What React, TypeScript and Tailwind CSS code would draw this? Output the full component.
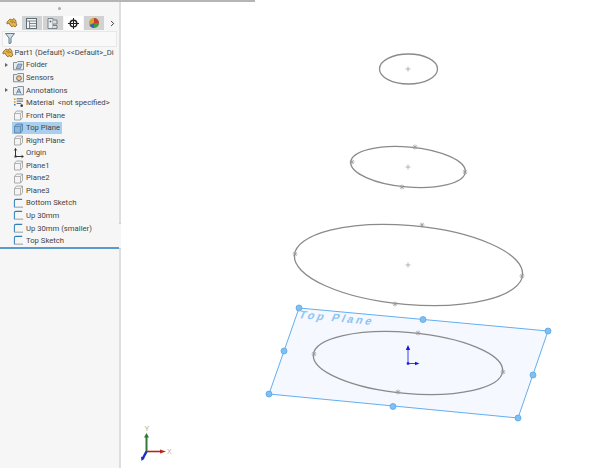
import { ChevronRight } from 'lucide-react';

const font = "font-['Roboto','Open_Sans',sans-serif]";

function PartIcon({ size = 12 }: { size?: number }) {
  return (
    <svg width={size} height={size} viewBox="0 0 12 12" className="shrink-0">
      <path d="M1 5 L4 2 L6 3 L8 1.5 L10 4 L10 6 L11 8 L9 10 L7 8.5 L6 10 L4 8 L3 6 L1 7 Z" fill="#e8b54a" stroke="#8a6420" strokeWidth="0.8" />
      <path d="M4 4 L7 6 M6 3.5 L9 6" stroke="#8a6420" strokeWidth="0.7" fill="none" />
    </svg>
  );
}

function FolderIcon({ kind }: { kind: 'folder' | 'sensor' | 'note' }) {
  return (
    <svg width="11" height="11" viewBox="0 0 11 11" className="shrink-0">
      <path d="M0.5 2.5 H4 L4.8 1.5 H10.5 V9.8 H0.5 Z" fill="#e9edf0" stroke="#6d7780" strokeWidth="0.8" />
      {kind === 'folder' && <path d="M3 8.5 L5 4 H9 L7.5 8.5 Z" fill="#9fb8d0" stroke="#52708c" strokeWidth="0.6" />}
      {kind === 'sensor' && <circle cx="6" cy="6.2" r="2.4" fill="#f3c98b" stroke="#555" strokeWidth="0.8" />}
      {kind === 'note' && <path d="M3.5 8.6 L5.8 3.6 L8 8.6 M4.6 7 H7" fill="none" stroke="#3d6fa5" strokeWidth="0.9" />}
    </svg>
  );
}

function MaterialIcon() {
  return (
    <svg width="11" height="11" viewBox="0 0 12 11" className="shrink-0">
      <path d="M4 1.5 H11 M4 4 H11 M4 6.5 H9" stroke="#555" strokeWidth="1" />
      <rect x="1" y="1" width="1.8" height="1.8" fill="#d6a02c" />
      <rect x="1" y="4" width="1.8" height="1.8" fill="#d6a02c" />
      <rect x="1" y="7" width="1.8" height="1.8" fill="#3f7fc0" />
      <circle cx="9.5" cy="9" r="1.5" fill="#444" />
    </svg>
  );
}

function PlaneIcon({ dark }: { dark?: boolean }) {
  const line = dark ? '#4f7ea8' : '#9a9a9a';
  return (
    <svg width="11" height="11" viewBox="0 0 11 11" className="shrink-0">
      <path d="M3.5 1 H9.5 V7.5 L7.5 10 H1.5 V3.5 Z" fill={dark ? '#8fb8da' : '#f4f4f4'} stroke={line} strokeWidth="0.8" />
      <path d="M1.5 3.5 H7.5 V10 M7.5 3.5 L9.5 1" fill="none" stroke={line} strokeWidth="0.7" />
    </svg>
  );
}

function OriginIcon() {
  return (
    <svg width="11" height="11" viewBox="0 0 11 11" className="shrink-0">
      <path d="M2.5 0.5 V8.5 H10" fill="none" stroke="#333" strokeWidth="1" />
      <path d="M1.2 2.5 L2.5 0.5 L3.8 2.5 M8.5 7.2 L10.5 8.5 L8.5 9.8" fill="none" stroke="#333" strokeWidth="0.8" />
      <rect x="1.5" y="7.5" width="2" height="2" fill="#333" />
    </svg>
  );
}

function SketchIcon() {
  return (
    <svg width="11" height="11" viewBox="0 0 12 11" className="shrink-0">
      <path d="M1.5 9.5 V2.5 Q1.5 1 3 1 H10" fill="none" stroke="#2f7fb8" strokeWidth="1.1" />
      <path d="M1.5 9.5 H11" stroke="#7a8a96" strokeWidth="0.9" />
    </svg>
  );
}

const rows: { label: string; icon: React.ReactNode; arrow?: boolean; selected?: boolean }[] = [
  { label: 'Folder', icon: <FolderIcon kind="folder" />, arrow: true },
  { label: 'Sensors', icon: <FolderIcon kind="sensor" /> },
  { label: 'Annotations', icon: <FolderIcon kind="note" />, arrow: true },
  { label: 'Material  <not specified>', icon: <MaterialIcon /> },
  { label: 'Front Plane', icon: <PlaneIcon /> },
  { label: 'Top Plane', icon: <PlaneIcon dark />, selected: true },
  { label: 'Right Plane', icon: <PlaneIcon /> },
  { label: 'Origin', icon: <OriginIcon /> },
  { label: 'Plane1', icon: <PlaneIcon /> },
  { label: 'Plane2', icon: <PlaneIcon /> },
  { label: 'Plane3', icon: <PlaneIcon /> },
  { label: 'Bottom Sketch', icon: <SketchIcon /> },
  { label: 'Up 30mm', icon: <SketchIcon /> },
  { label: 'Up 30mm (smaller)', icon: <SketchIcon /> },
  { label: 'Top Sketch', icon: <SketchIcon /> },
];

function TreeRow({ label, icon, arrow, selected }: { label: string; icon: React.ReactNode; arrow?: boolean; selected?: boolean }) {
  return (
    <div className="flex h-[12.55px] items-center pl-[4px]">
      <div className="flex w-[9px] shrink-0 items-center">
        {arrow && <div className="ml-[1px] h-0 w-0 border-y-[2.5px] border-l-[3px] border-y-transparent border-l-[#666]" />}
      </div>
      <div className={selected ? 'flex h-[12.5px] items-center bg-[#a9cfee] pr-[2px] -ml-[1px] pl-[1px]' : 'flex items-center'}>
        {icon}
        <span className="ml-[2px] whitespace-pre text-[7.7px] leading-none text-[#444]">{label}</span>
      </div>
    </div>
  );
}

function Tabs() {
  return (
    <div className="flex h-[14px] items-stretch gap-[1px] pl-[3px]">
      <div className="flex w-[18px] items-center justify-center bg-[#f6f6f6]"><PartIcon /></div>
      <div className="flex w-[20px] items-center justify-center bg-[#d2d2d2]">
        <svg width="11" height="11" viewBox="0 0 11 11">
          <rect x="0.5" y="0.5" width="10" height="10" fill="#f4f4f4" stroke="#5e6e78" />
          <path d="M0.5 3 H10.5 M3.5 3 V10.5 M3.5 5.5 H10.5 M3.5 8 H10.5" stroke="#5e6e78" strokeWidth="0.8" />
        </svg>
      </div>
      <div className="flex w-[20px] items-center justify-center bg-[#d2d2d2]">
        <svg width="11" height="11" viewBox="0 0 11 11">
          <path d="M1 0.5 H6 V10.5 H1 Z" fill="#eee" stroke="#5e6e78" strokeWidth="0.8" />
          <path d="M6 2 H10 V6 H6 M6 7.5 H10 V10.5 H6" fill="#ddd" stroke="#5e6e78" strokeWidth="0.8" />
          <circle cx="3.5" cy="3.5" r="1" fill="#5e6e78" />
        </svg>
      </div>
      <div className="flex w-[20px] items-center justify-center bg-white">
        <svg width="11" height="11" viewBox="0 0 11 11">
          <circle cx="5.5" cy="5.5" r="3.3" fill="none" stroke="#222" strokeWidth="1.4" />
          <path d="M5.5 0 V11 M0 5.5 H11" stroke="#222" strokeWidth="1" />
        </svg>
      </div>
      <div className="flex w-[20px] items-center justify-center bg-[#d2d2d2]">
        <svg width="12" height="12" viewBox="0 0 12 12">
          <circle cx="6" cy="6" r="5" fill="#d4a32c" />
          <path d="M6 6 L6 1 A5 5 0 0 1 11 6 Z" fill="#c53b32" />
          <path d="M6 6 L11 6 A5 5 0 0 1 6 11 Z" fill="#3f9a48" />
          <path d="M6 6 L6 11 A5 5 0 0 1 1.5 8 Z" fill="#3d5fb0" />
        </svg>
      </div>
      <div className="flex w-[14px] items-center justify-center">
        <ChevronRight size={9} strokeWidth={2.4} color="#222" />
      </div>
    </div>
  );
}

function Sidebar() {
  return (
    <div className={`${font} relative w-[121px] shrink-0 border-r-2 border-[#dedede] bg-[#f6f6f6]`}>
      <div className="flex h-[16px] items-center justify-center">
        <div className="h-[3px] w-[3px] rounded-full bg-[#aaa]" />
      </div>
      <Tabs />
      <div className="mx-[2px] mt-[1px] flex h-[15.5px] items-center border border-[#e8e8e8] bg-[#f9f9f9] pl-[1.5px]">
        <svg width="10" height="11" viewBox="0 0 10 11">
          <path d="M0.5 0.5 H9.5 L6 5 V10 L4 10.5 V5 Z" fill="#cfe0ea" stroke="#52707e" strokeWidth="0.9" />
        </svg>
      </div>
      <div className="flex h-[12.5px] items-center pl-[2px]">
        <PartIcon />
        <span className="ml-[0.5px] overflow-hidden whitespace-nowrap text-[7.7px] leading-none text-[#444]">Part1 (Default) {'<<Default>_Di'}</span>
      </div>
      {rows.map((r) => <TreeRow key={r.label} {...r} />)}
      <div className="h-[2px] w-[119px] bg-[#5a9bcb]" />
      <div className="absolute left-[119px] top-[223px] flex h-[26px] w-[7px] items-center justify-center border border-l-0 border-[#cfcfcf] bg-[#f6f6f6]">
        <div className="h-[3px] w-[3px] rounded-full bg-[#aaa]" />
      </div>
    </div>
  );
}

const GRAY = '#8a8a8a';

function Star({ x, y }: { x: number; y: number }) {
  return (
    <path
      d={`M${x - 2.5} ${y} H${x + 2.5} M${x} ${y - 2.5} V${y + 2.5} M${x - 1.8} ${y - 1.8} L${x + 1.8} ${y + 1.8} M${x + 1.8} ${y - 1.8} L${x - 1.8} ${y + 1.8}`}
      stroke="#999"
      strokeWidth="0.7"
      fill="none"
    />
  );
}

function Plus({ x, y }: { x: number; y: number }) {
  return <path d={`M${x - 2.5} ${y} H${x + 2.5} M${x} ${y - 2.5} V${y + 2.5}`} stroke="#999" strokeWidth="0.7" />;
}

const handles = [[299, 308], [423, 319.5], [548, 331], [533, 375], [518, 418], [393, 406.5], [269, 394], [284, 351]];

// the canvas is a drawing, offset by the width of the sidebar
function Viewport() {
  return (
    <div className="relative h-full min-w-0 flex-1 bg-white">
      <svg width="479" height="468" viewBox="121 0 479 468" className="block">
        <ellipse cx="408.5" cy="69" rx="29" ry="15" fill="none" stroke={GRAY} strokeWidth="1.3" />
        <Plus x={408} y={69} />

        <ellipse cx="408" cy="167" rx="57.5" ry="20" transform="rotate(5 408 167)" fill="none" stroke={GRAY} strokeWidth="1.3" />
        <Plus x={408} y={167} />
        <Star x={415} y={147} /><Star x={352} y={162} /><Star x={465} y={172} /><Star x={402} y={187} />

        <ellipse cx="408.5" cy="265" rx="114.5" ry="39.5" transform="rotate(5 408.5 265)" fill="none" stroke={GRAY} strokeWidth="1.3" />
        <Plus x={408} y={265} />
        <Star x={422} y={225} /><Star x={295} y={254} /><Star x={522} y={276} /><Star x={395} y={304} />

        <polygon points="299,308 548,331 518,418 269,394" fill="#f5f8ff" stroke="#62aef0" strokeWidth="1" />
        <text
          x="0"
          y="0"
          transform="translate(298 318) rotate(5.3) skewX(-18)"
          fontFamily="'Liberation Sans', sans-serif"
          fontSize="11"
          fontWeight="700"
          letterSpacing="2.6"
          fill="#8ec4f4"
        >
          Top Plane
        </text>
        <ellipse cx="408" cy="363" rx="95" ry="30.5" transform="rotate(5 408 363)" fill="none" stroke={GRAY} strokeWidth="1.3" />
        <Star x={418} y={333} /><Star x={314} y={354} /><Star x={503} y={372} /><Star x={398} y={392} />

        <path d="M408 363.5 V347" stroke="#2a2af0" strokeWidth="0.9" />
        <path d="M405.8 350 L408 345 L410.2 350 Z" fill="#1616e8" />
        <path d="M408 363.5 H417" stroke="#2a2af0" strokeWidth="0.9" />
        <path d="M415 361.8 L419.5 363.5 L415 365.2 Z" fill="#1616e8" />
        <rect x="406.8" y="362.3" width="2.4" height="2.4" fill="#1616e8" />

        {handles.map(([x, y]) => (
          <circle key={`${x}-${y}`} cx={x} cy={y} r="3" fill="#7fc0f2" stroke="#5aa6e6" strokeWidth="0.8" />
        ))}

        <path d="M146.5 452 V436" stroke="#2f7a34" strokeWidth="2" />
        <path d="M144 437.5 L146.5 433 L149 437.5 Z" fill="#2f7a34" />
        <path d="M146.5 451.5 H162" stroke="#b5281c" strokeWidth="1.6" />
        <path d="M160 449.5 L166 451.5 L160 453.5 Z" fill="#b5281c" />
        <path d="M146.5 451.5 L142.5 459" stroke="#1c2cc8" strokeWidth="2.4" />
        <path d="M141 456.5 L144.5 458.5 L141.5 461 Z" fill="#1c2cc8" />
        <text x="144.5" y="431" fontFamily="'Liberation Sans', sans-serif" fontSize="7" fill="#8fb094">Y</text>
        <text x="167" y="454" fontFamily="'Liberation Sans', sans-serif" fontSize="7" fill="#d0aa96">X</text>
      </svg>
    </div>
  );
}

export default function App() {
  return (
    <div className="relative flex h-[468px] w-[600px] overflow-hidden bg-white">
      <div className="absolute left-0 top-0 z-10 h-[2px] w-[255px] bg-[#b5b5b5]" />
      <Sidebar />
      <Viewport />
    </div>
  );
}
